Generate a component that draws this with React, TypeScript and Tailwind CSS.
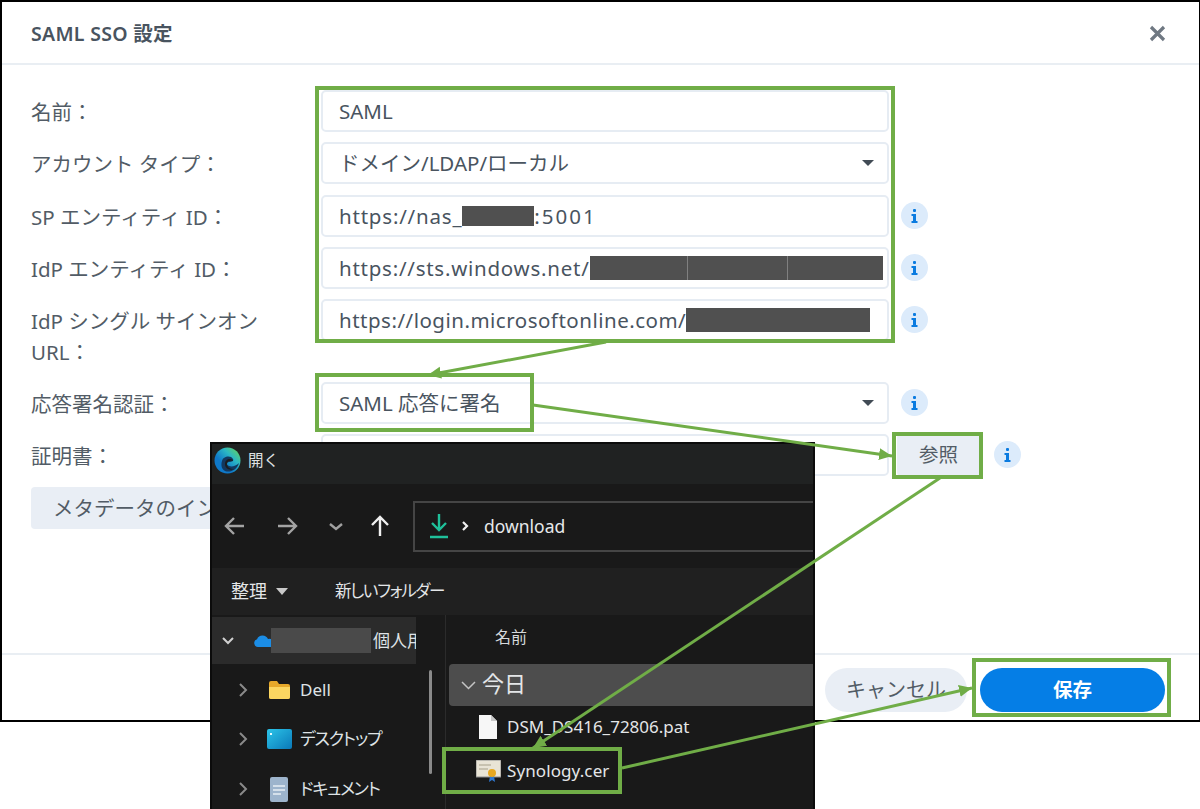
import { ReactNode } from "react";

const FONT = "font-['Noto_Sans','Noto_Sans_CJK_JP',sans-serif]";

function InfoIcon() {
  return (
    <span className="flex h-[27px] w-[27px] shrink-0 items-center justify-center rounded-full bg-[#dcebfb]">
      <svg width="9" height="14" viewBox="0 0 9 14" fill="#0a7be0">
        <rect x="3" y="0" width="3" height="3" rx="1" />
        <path d="M1.5 5h4.5v7h1.5v2h-6v-2h1.500v-5h-1.500z" />
      </svg>
    </span>
  );
}

function Caret() {
  return (
    <svg width="14" height="8" viewBox="0 0 14 8" className="shrink-0">
      <path d="M1 1h12l-6 6z" fill="#414b55" />
    </svg>
  );
}

function Redact({ w, h = "h-[24px]" }: { w: string; h?: string }) {
  return <span className={`inline-block ${w} ${h} bg-[#505050] align-middle`} />;
}

function Field({ children, select, tracking = "" }: { children?: ReactNode; select?: boolean; tracking?: string }) {
  return (
    <div className="flex h-[42px] w-[568px] shrink-0 items-center justify-between overflow-hidden whitespace-nowrap rounded-[5px] border-2 border-[#e6ecf3] pl-[16px] pr-[6px] text-[20.5px] text-[#49545f]">
      <span className={`flex items-center ${tracking}`}>{children}</span>
      {select && (
        <span className="mr-[6px]">
          <Caret />
        </span>
      )}
    </div>
  );
}

function Row({
  label,
  children,
  info,
  className = "",
}: {
  label: ReactNode;
  children: ReactNode;
  info?: boolean;
  className?: string;
}) {
  return (
    <div className={`flex items-start ${className}`}>
      <div className="h-[42px] w-[290px] shrink-0 pt-px text-[20.5px] leading-[42px] text-[#525c66]">{label}</div>
      {children}
      {info && (
        <span className="ml-[12px] mt-[7px]">
          <InfoIcon />
        </span>
      )}
    </div>
  );
}

function SettingsDialog() {
  return (
    <div className="flex h-[722px] w-[1200px] flex-col border-2 border-b-[2px] border-black border-l-[2px] border-r-[1px] bg-white">
      <div className="flex h-[63px] shrink-0 items-center justify-between border-b-2 border-[#e9eef3] pl-[29px] pr-[33px] pt-[2px]">
        <span className="text-[19.5px] font-semibold tracking-[0.3px] text-[#49545f]">SAML SSO 設定</span>
        <svg width="17" height="17" viewBox="0 0 17 17" stroke="#6f7882" strokeWidth="3.2" fill="none">
          <path d="M2 2l13 13M15 2L2 15" />
        </svg>
      </div>

      <div className="flex flex-1 flex-col gap-[10px] pl-[29px] pt-[25px]">
        <Row label="名前：">
          <Field>SAML</Field>
        </Row>
        <Row label="アカウント タイプ：">
          <Field select>ドメイン/LDAP/ローカル</Field>
        </Row>
        <Row label="SP エンティティ ID：" info className="mt-px">
          <Field tracking="tracking-[0.8px]">
            https://nas_
            <Redact w="w-[72px]" h="h-[20px]" />
            <span className="tracking-[2px]">:5001</span>
          </Field>
        </Row>
        <Row label="IdP エンティティ ID：" info>
          <Field tracking="tracking-[0.75px]">
            https://sts.windows.net/
            <span className="flex items-center gap-px bg-[#808080]">
              <Redact w="w-[97px]" />
              <Redact w="w-[99px]" />
              <Redact w="w-[95px]" />
            </span>
          </Field>
        </Row>
        <div className="flex h-[73px] items-start">
          <div className="w-[290px] shrink-0 pt-[7px] text-[20.5px] leading-[31px] text-[#525c66]">
            IdP シングル サインオン
            <br />
            URL：
          </div>
          <Field tracking="tracking-[0.5px]">
            https://login.microsoftonline.com/
            <Redact w="w-[184px]" />
          </Field>
          <span className="ml-[12px] mt-[7px]">
            <InfoIcon />
          </span>
        </div>
        <Row label="応答署名認証：" info>
          <Field select>SAML 応答に署名</Field>
        </Row>
        <Row label="証明書：">
          <Field />
          <button className="ml-[8px] h-[42px] w-[83px] shrink-0 rounded-[4px] bg-[#e9eef5] text-[19.5px] text-[#525c66]">
            参照
          </button>
          <span className="ml-[14px] mt-[7px]">
            <InfoIcon />
          </span>
        </Row>
        <div className="mt-px">
          <button className="h-[42px] w-[240px] whitespace-nowrap rounded-[4px] bg-[#e9eef5] pl-[22px] text-left text-[20.5px] text-[#525c66]">
            メタデータのインポート
          </button>
        </div>
      </div>

      <div className="flex h-[67px] shrink-0 justify-end gap-[13px] border-t-2 border-[#e9eef3] pr-[34px] pt-[13px]">
        <button className="h-[44px] w-[142px] rounded-full bg-[#e9eef5] text-[20px] text-[#525c66]">キャンセル</button>
        <button className="h-[44px] w-[185px] rounded-full bg-[#057ee6] text-[19.5px] font-semibold text-white">保存</button>
      </div>
    </div>
  );
}

function EdgeLogo() {
  return (
    <svg width="27" height="27" viewBox="0 0 27 27">
      <defs>
        <linearGradient id="edge" x1="0" y1="1" x2="1" y2="0">
          <stop offset="0.35" stopColor="#0f78c8" />
          <stop offset="0.65" stopColor="#2bb7c4" />
          <stop offset="1" stopColor="#6fd84a" />
        </linearGradient>
      </defs>
      <circle cx="13.500" cy="13.500" r="13" fill="url(#edge)" />
      <path d="M8 14c1-5 9-6 11-2 1 2-1 3-4 3-3 0-3 3 0 4 3 1 7 0 10-3-2 7-9 10-14 8-4-2-4-7-3-10z" fill="#12385f" />
      <path d="M11 17c0-3 2-5 5-5 2 0 3 1 3 2-3-1-6 0-6 3 0 3 3 5 7 5-5 2-9-1-9-5z" fill="#1b1d1f" />
    </svg>
  );
}

function SideRow({ icon, label, className = "" }: { icon: ReactNode; label: ReactNode; className?: string }) {
  return (
    <div className={`flex items-center text-[17px] text-[#dfe3e6] ${className}`}>
      <svg width="10" height="16" viewBox="0 0 10 16" fill="none" stroke="#8a8a8a" strokeWidth="2" className="ml-[26px]">
        <path d="M2 2l6 6-6 6" />
      </svg>
      <span className="ml-[15px] flex w-[32px] justify-center">{icon}</span>
      <span className="ml-[5px] whitespace-nowrap">{label}</span>
    </div>
  );
}

function OpenDialog() {
  return (
    <div className="absolute left-[210px] top-[442px] flex h-[367px] w-[605px] flex-col overflow-hidden border-2 border-b-0 border-[#0b0b0b] bg-[#191919] text-[#e4e6e8]">
      <div className="flex h-[40px] shrink-0 items-start bg-[#202222] pl-[2px] pt-[3px]">
        <EdgeLogo />
        <span className="ml-[7px] mt-[2px] text-[15.5px] text-[#dfe1e3]">開く</span>
      </div>

      <div className="flex h-[84px] shrink-0 items-center">
        <svg width="190" height="24" viewBox="0 0 190 24" fill="none" strokeWidth="2.400" className="ml-[12px] shrink-0">
          <path d="M20 12H2m8-8l-8 8 8 8" stroke="#a3a3a3" />
          <path d="M54 12h18m-8-8l8 8-8 8" stroke="#a3a3a3" />
          <path d="M106 10l6 5 6-5" stroke="#a0a0a0" />
          <path d="M156 22V3m-8 8l8-8 8 8" stroke="#f0f0f0" />
        </svg>
        <div className="ml-[-1px] flex h-[51px] w-[420px] shrink-0 items-center border-2 border-r-0 border-[#454545] pl-[14px]">
          <svg width="20" height="26" viewBox="0 0 20 26" fill="none" stroke="#1fc09a" strokeWidth="2.400">
            <path d="M10 1v16M3 10l7 7 7-7M1 24h18" />
          </svg>
          <svg width="8" height="10" viewBox="0 0 8 10" fill="none" stroke="#f0f0f0" strokeWidth="2.200" className="ml-[12px]">
            <path d="M2 1l4 4-4 4" />
          </svg>
          <span className="ml-[15px] text-[17.500px] text-[#e6e8ea]">download</span>
        </div>
      </div>

      <div className="flex h-[47px] shrink-0 items-center bg-[#202020] pl-[19px]">
        <span className="text-[18px]">整理</span>
        <svg width="12" height="7" viewBox="0 0 12 7" className="ml-[9px]">
          <path d="M0 0h12l-6 7z" fill="#c9c9c9" />
        </svg>
        <span className="ml-[47px] text-[16.500px] tracking-[-1.300px] [font-feature-settings:'palt']">新しいフォルダー</span>
      </div>

      <div className="flex min-h-0 flex-1">
        <div className="relative w-[219px] shrink-0 pt-[2px]">
          <div className="flex h-[47px] w-[204px] items-center overflow-hidden whitespace-nowrap bg-[#2b2b2b] text-[17px] text-[#dfe3e6]">
            <svg width="14" height="10" viewBox="0 0 14 10" fill="none" stroke="#d0d0d0" strokeWidth="2" className="ml-[9px] shrink-0">
              <path d="M2 2l5 5 5-5" />
            </svg>
            <svg width="17" height="14" viewBox="0 0 17 14" className="ml-[19px] shrink-0">
              <path d="M4 13a4 4 0 0 1-1-7.800A6 6 0 0 1 14 5a4 4 0 0 1 3 8z" fill="#1b8de6" />
            </svg>
            <span className="h-[25px] w-[100px] shrink-0 bg-[#4a4a4a]" />
            <span className="ml-[2px]">個人用</span>
          </div>
          <SideRow
            className="mt-[2px] h-[47px]"
            label="Dell"
            icon={
              <svg width="23" height="19" viewBox="0 0 23 19">
                <path d="M1 3a2 2 0 0 1 2-2h6l2 3h9a2 2 0 0 1 2 2v11a2 2 0 0 1-2 2H3a2 2 0 0 1-2-2z" fill="#e6a82a" />
                <path d="M1 7h21v10a2 2 0 0 1-2 2H3a2 2 0 0 1-2-2z" fill="#fbd661" />
              </svg>
            }
          />
          <SideRow
            className="h-[51px]"
            label={<span className="tracking-[-1.200px] [font-feature-settings:'palt']">デスクトップ</span>}
            icon={
              <svg width="25" height="20" viewBox="0 0 25 20">
                <defs>
                  <linearGradient id="desk" x1="0" y1="0" x2="1" y2="1">
                    <stop offset="0" stopColor="#2cc4e8" />
                    <stop offset="1" stopColor="#0a78b8" />
                  </linearGradient>
                </defs>
                <rect width="25" height="20" rx="2" fill="url(#desk)" />
                <rect x="3" y="4" width="2" height="2" fill="#e8fbff" />
              </svg>
            }
          />
          <SideRow
            className="h-[50px]"
            label={<span className="tracking-[-1.200px] [font-feature-settings:'palt']">ドキュメント</span>}
            icon={
              <svg width="18" height="25" viewBox="0 0 18 25">
                <rect width="18" height="25" rx="2" fill="#9db4cc" />
                <path d="M3 9h12M3 13h12M3 17h8" stroke="#e8eef4" strokeWidth="1.600" />
              </svg>
            }
          />
          <div className="absolute left-[217px] top-[55px] h-[104px] w-[3px] rounded-full bg-[#8a8a8a]" />
        </div>

        <div className="ml-[14px] w-px shrink-0 bg-[#2b2b2b]" />

        <div className="min-w-0 flex-1 pl-[3px]">
          <div className="flex h-[47px] items-center pb-[4px] pl-[46px] text-[16px] text-[#d6d9dc]">名前</div>
          <div className="mt-[2px] flex h-[42px] items-center rounded-l-[4px] bg-[#4d4d4d] pb-[3px] pl-[12px] text-[22px]">
            <svg width="15" height="9" viewBox="0 0 15 9" fill="none" stroke="#c4c4c4" strokeWidth="1.500" className="mt-[3px]">
              <path d="M1 1l6.500 6.500L14 1" />
            </svg>
            <span className="ml-[6px]">今日</span>
          </div>
          <div className="flex h-[42px] items-center pl-[30px] text-[17px]">
            <svg width="18" height="24" viewBox="0 0 18 24" className="shrink-0">
              <path d="M0 0h12l6 6v18H0z" fill="#f7f7f7" />
              <path d="M12 0v6h6z" fill="#c8c8c8" />
            </svg>
            <span className="ml-[10px] whitespace-nowrap">DSM_DS416_72806.pat</span>
          </div>
          <div className="flex h-[46px] items-center pl-[27px] text-[17px]">
            <svg width="25" height="22" viewBox="0 0 25 22" className="shrink-0">
              <rect y="0" width="25" height="17" fill="#e9e4d6" stroke="#8d8d8d" />
              <path d="M3 5h12M3 9h9" stroke="#a89f8a" strokeWidth="1.200" />
              <path d="M14 16l-1 6 3-2 3 2-1-6z" fill="#2f78d0" />
              <circle cx="16" cy="13" r="4" fill="#e8a820" />
            </svg>
            <span className="ml-[6px] tracking-[0.1px]">Synology.cer</span>
          </div>
        </div>
      </div>
    </div>
  );
}

function Annotations() {
  return (
    <>
      <div className="absolute left-[315px] top-[86px] h-[257px] w-[580px] border-[4px] border-[#70ad47]" />
      <div className="absolute left-[315px] top-[373px] h-[59px] w-[219px] border-[4px] border-[#70ad47]" />
      <div className="absolute left-[892px] top-[432px] h-[47px] w-[91px] border-[4px] border-[#70ad47]" />
      <div className="absolute left-[442px] top-[747px] h-[47px] w-[180px] border-[4px] border-[#70ad47]" />
      <div className="absolute left-[972px] top-[658px] h-[59px] w-[199px] border-[4px] border-[#70ad47]" />
      <svg width="1200" height="809" className="pointer-events-none absolute left-0 top-0" fill="none" stroke="#70ad47" strokeWidth="3">
        <defs>
          <marker id="head" markerUnits="userSpaceOnUse" markerWidth="14" markerHeight="14" refX="13" refY="7" orient="auto">
            <path d="M0 1l13 6-13 6z" fill="#70ad47" stroke="none" />
          </marker>
        </defs>
        <line x1="606" y1="342" x2="428" y2="375" markerEnd="url(#head)" />
        <line x1="533" y1="405" x2="892" y2="456" markerEnd="url(#head)" />
        <line x1="940" y1="478" x2="533" y2="748" markerEnd="url(#head)" />
        <line x1="622" y1="768" x2="972" y2="688" markerEnd="url(#head)" />
      </svg>
    </>
  );
}

export default function App() {
  return (
    <div className={`relative h-[809px] w-[1200px] overflow-hidden bg-white ${FONT}`}>
      <SettingsDialog />
      <OpenDialog />
      <Annotations />
    </div>
  );
}
